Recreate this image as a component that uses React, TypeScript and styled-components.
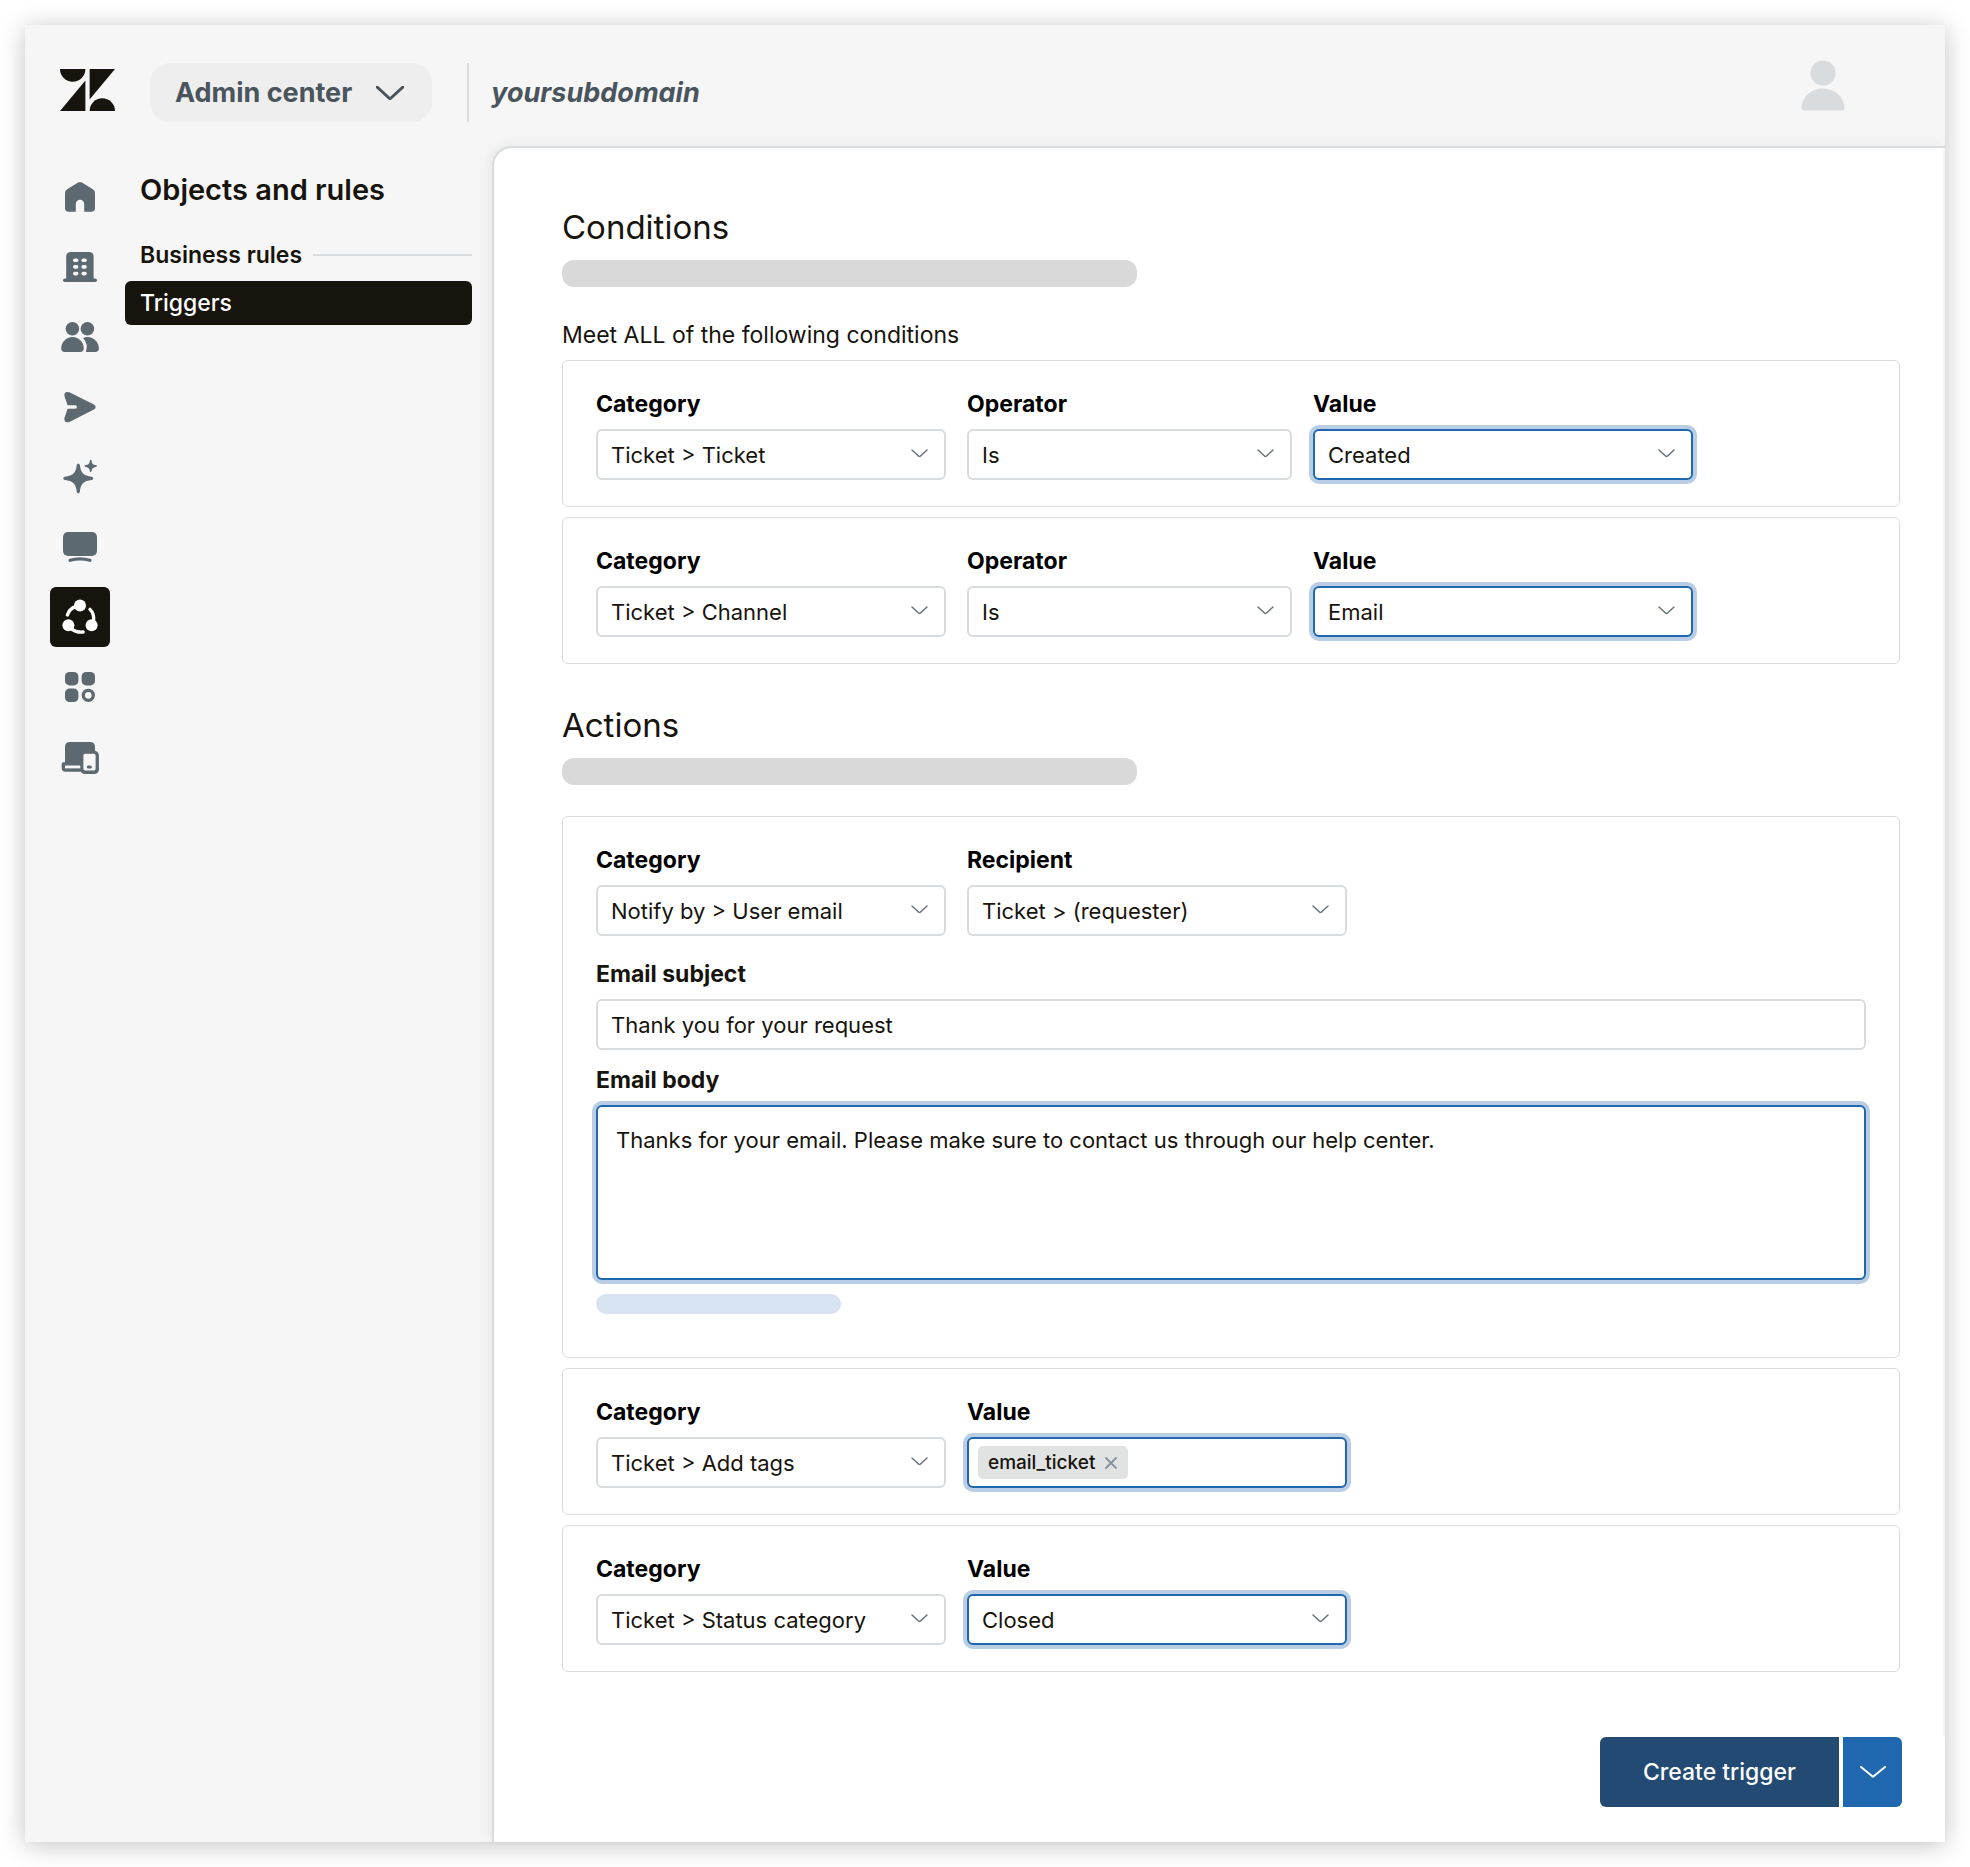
import React, { useId, useState } from 'react';
import styled, { createGlobalStyle, css } from 'styled-components';

const color = {
  ink: '#17140d',
  label: '#000000',
  slate: '#49545c',
  icon: '#5c6970',
  line: '#d8dcde',
  chrome: '#f6f6f6',
  pill: '#eeeeee',
  placeholder: '#d9d9d9',
  placeholderBlue: '#d7e3f1',
  focus: '#1f68b0',
  focusRing: '#b9cde5',
  navy: '#234a72',
};

const GlobalStyle = createGlobalStyle`
  *, *::before, *::after { box-sizing: border-box; }
  body {
    margin: 0;
    background: #ffffff;
    color: ${color.ink};
    font-family: Inter, "Liberation Sans", sans-serif;
    font-size: 22px;
    line-height: 30px;
  }
  button, input, select, textarea {
    margin: 0;
    font: inherit;
    color: inherit;
  }
`;

const Window = styled.div`
  display: flex;
  flex-direction: column;
  min-height: calc(100vh - 50px);
  margin: 25px;
  background: ${color.chrome};
  box-shadow: 0 3px 24px rgba(0, 0, 0, 0.24);
`;

const Header = styled.header`
  display: flex;
  align-items: center;
  height: 121px;
  padding: 14px 100px 0 35px;
`;

const LogoLink = styled.a`
  display: flex;
  margin: 0 35px 5px 0;
`;

const ProductButton = styled.button`
  display: flex;
  align-items: center;
  gap: 24px;
  height: 59px;
  padding: 0 28px 0 25px;
  border: 0;
  border-radius: 20px;
  background: ${color.pill};
  color: ${color.slate};
  font-size: 27px;
  font-weight: 700;
`;

const Subdomain = styled.div`
  display: flex;
  align-items: center;
  height: 59px;
  margin-left: 35px;
  padding-left: 22px;
  border-left: 2px solid ${color.line};
  color: ${color.slate};
  font-size: 27px;
  font-style: italic;
  font-weight: 700;
`;

const ProfileButton = styled.button`
  display: flex;
  margin: 0 0 14px auto;
  padding: 0;
  border: 0;
  background: none;
`;

const Body = styled.div`
  display: flex;
  flex: 1;
`;

const Rail = styled.nav`
  display: flex;
  flex: 0 0 100px;
  flex-direction: column;
  align-items: center;
  gap: 10px;
  padding: 21px 0 0 10px;
`;

const RailLink = styled.a<{ $active?: boolean }>`
  display: grid;
  place-items: center;
  width: 60px;
  height: 60px;
  border-radius: 6px;
  background: ${(p) => (p.$active ? color.ink : 'transparent')};
  color: ${(p) => (p.$active ? '#ffffff' : color.icon)};
`;

const SideNav = styled.nav`
  flex: 0 0 367px;
  padding: 24px 20px 0 0;
`;

const SideTitle = styled.h1`
  margin: 0 0 31px;
  padding-left: 15px;
  font-size: 29px;
  font-weight: 600;
  line-height: 40px;
`;

const SideGroup = styled.h2`
  display: flex;
  align-items: center;
  gap: 11px;
  margin: 0 0 12px;
  padding-left: 15px;
  font-size: 23px;
  font-weight: 600;
  line-height: 28px;

  &::after {
    content: '';
    flex: 1;
    height: 2px;
    background: ${color.line};
  }
`;

const SideLink = styled.a`
  display: block;
  padding: 7px 15px;
  border-radius: 6px;
  background: ${color.ink};
  color: #ffffff;
  font-size: 23px;
  font-weight: 500;
  text-decoration: none;
`;

const Main = styled.main`
  display: flex;
  flex: 1;
  flex-direction: column;
  min-width: 0;
  border-top: 2px solid ${color.line};
  border-left: 2px solid ${color.line};
  border-top-left-radius: 20px;
  background: #ffffff;
  box-shadow: -4px -2px 10px rgba(0, 0, 0, 0.05);
`;

const Content = styled.div`
  display: flex;
  flex: 1;
  flex-direction: column;
  gap: 41px;
  padding: 59px 43px 65px 68px;
  border-right: 2px solid ${color.chrome};
`;

const Heading = styled.h2`
  margin: 0 0 13px;
  font-size: 33px;
  font-weight: 400;
  line-height: 40px;
`;

const Placeholder = styled.div<{ $tone?: 'blue' }>`
  max-width: 575px;
  height: 27px;
  border-radius: 12px;
  background: ${color.placeholder};

  ${(p) =>
    p.$tone === 'blue' &&
    css`
      max-width: 245px;
      height: 20px;
      border-radius: 10px;
      background: ${color.placeholderBlue};
    `}
`;

const Intro = styled.p`
  margin: 33px 0 10px;
  font-size: 23px;
`;

const CardList = styled.div<{ $spaced?: boolean }>`
  display: flex;
  flex-direction: column;
  gap: 10px;
  margin-top: ${(p) => (p.$spaced ? '31px' : '0')};
`;

const Card = styled.div<{ $tall?: boolean }>`
  padding: 28px 33px ${(p) => (p.$tall ? '43px' : '26px')};
  border: 1px solid ${color.line};
  border-radius: 6px;
`;

const Row = styled.div`
  display: flex;
  gap: 21px;
`;

const widths = { category: '350px', operator: '325px', value: '380px', full: '100%' };
type Width = keyof typeof widths;

const Field = styled.div<{ $width: Width; $gap?: number }>`
  display: flex;
  flex: 0 1 ${(p) => widths[p.$width]};
  flex-direction: column;
  gap: 10px;
  min-width: 0;
  margin-top: ${(p) => p.$gap ?? 0}px;
`;

const Label = styled.label<{ $soft?: boolean }>`
  color: ${(p) => (p.$soft ? color.ink : color.label)};
  font-size: 23px;
  font-weight: 700;
`;

const boxStyle = css<{ $focused?: boolean }>`
  width: 100%;
  border: 2px solid ${(p) => (p.$focused ? color.focus : color.line)};
  border-radius: 6px;
  outline: 0;
  background: #ffffff;
  box-shadow: ${(p) => (p.$focused ? `0 0 0 4px ${color.focusRing}` : 'none')};
`;

const SelectFrame = styled.div`
  display: grid;
  align-items: center;

  > * { grid-area: 1 / 1; }
  > svg { justify-self: end; margin: 0 18px 2px 0; pointer-events: none; color: #68737d; }
`;

const SelectBox = styled.select<{ $focused?: boolean }>`
  ${boxStyle}
  height: 51px;
  padding: 0 44px 0 13px;
  appearance: none;
`;

const TextInput = styled.input<{ $focused?: boolean }>`
  ${boxStyle}
  height: 51px;
  padding: 0 13px;
`;

const TextArea = styled.textarea<{ $focused?: boolean }>`
  ${boxStyle}
  display: block;
  height: 175px;
  margin-bottom: 4px;
  padding: 18px;
  resize: none;
`;

const TagBox = styled.div<{ $focused?: boolean }>`
  ${boxStyle}
  display: flex;
  align-items: center;
  gap: 8px;
  height: 51px;
  padding: 0 9px;
`;

const Tag = styled.span`
  display: flex;
  align-items: center;
  gap: 10px;
  height: 33px;
  padding: 0 11px 0 10px;
  border-radius: 5px;
  background: #e1e2e2;
  font-size: 19px;
  font-weight: 500;
`;

const TagRemove = styled.button`
  display: flex;
  padding: 0;
  border: 0;
  background: none;
  color: #87929d;
`;

const TagEntry = styled.input`
  flex: 1;
  min-width: 0;
  padding: 0;
  border: 0;
  outline: 0;
  background: none;
`;

const Footer = styled.footer`
  display: flex;
  justify-content: flex-end;
  gap: 4px;
  padding: 0 43px 35px;
`;

const PrimaryButton = styled.button`
  height: 70px;
  padding: 0 43px;
  border: 0;
  border-radius: 6px 0 0 6px;
  background: ${color.navy};
  color: #ffffff;
  font-size: 23px;
  font-weight: 500;
`;

const MenuButton = styled.button`
  display: grid;
  place-items: center;
  width: 59px;
  height: 70px;
  padding: 0;
  border: 0;
  border-radius: 0 6px 6px 0;
  background: ${color.focus};
  color: #ffffff;
`;

type ChevronProps = { width: number; height: number; stroke: number };

const Chevron = ({ width, height, stroke }: ChevronProps) => (
  <svg width={width} height={height} viewBox={`0 0 ${width} ${height}`} fill="none" aria-hidden="true">
    <path
      d={`M1 1 L${width / 2 - 1} ${height - 2} Q${width / 2} ${height - 1} ${width / 2 + 1} ${height - 2} L${width - 1} 1`}
      stroke="currentColor"
      strokeWidth={stroke}
      strokeLinecap="round"
      strokeLinejoin="round"
    />
  </svg>
);

const Logo = () => (
  <svg width="55" height="42" viewBox="0 0 55 42" fill={color.ink} aria-hidden="true">
    <path d="M0 0H25.4A12.7 12.7 0 0 1 0 0Z" />
    <path d="M25.4 11.4V42H0Z" />
    <path d="M29.6 0H55L29.6 30.6Z" />
    <path d="M29.6 42A12.7 12.7 0 0 1 55 42Z" />
  </svg>
);

const Avatar = () => (
  <svg width="44" height="51" viewBox="0 0 44 51" fill={color.line} aria-hidden="true">
    <circle cx="22" cy="13" r="12.6" />
    <path d="M22 28.5C34 28.5 43 37.5 43.5 47.5Q43.5 50.5 40.5 50.5H3.5Q.5 50.5 .5 47.5C1 37.5 10 28.5 22 28.5Z" />
  </svg>
);

const RailIcon = ({ children }: { children: React.ReactNode }) => (
  <svg width="40" height="40" viewBox="0 0 40 40" fill="currentColor" aria-hidden="true">
    {children}
  </svg>
);

const railItems: { name: string; active?: boolean; icon: React.ReactNode }[] = [
  {
    name: 'Home',
    icon: (
      <path d="M18 5.5Q20 4.3 22 5.5L33.2 12.6Q35 13.8 35 16V31Q35 34.8 31.2 34.8H24.2V27A4.2 4.2 0 0 0 15.8 27V34.8H8.8Q5 34.8 5 31V16Q5 13.8 6.8 12.6Z" />
    ),
  },
  {
    name: 'Account',
    icon: (
      <>
        <path d="M11 5H28.8Q33.6 5 33.6 9.8V33H6.2V9.8Q6.2 5 11 5Z" />
        <rect x="3" y="31.6" width="34" height="3.4" rx="1.7" />
        <g fill={color.chrome}>
          {[11.4, 18.1, 24.8].map((y) => (
            <React.Fragment key={y}>
              <rect x="13" y={y} width="5.4" height="3.6" rx="1.8" />
              <rect x="21.4" y={y} width="5.4" height="3.6" rx="1.8" />
            </React.Fragment>
          ))}
        </g>
      </>
    ),
  },
  {
    name: 'People',
    icon: (
      <>
        <circle cx="12.4" cy="11.7" r="6.8" />
        <circle cx="27.4" cy="11.7" r="6.8" />
        <path d="M12.5 20C18.8 20 23.8 25.4 23.8 31.2Q23.8 35 20 35H5Q1.2 35 1.2 31.2C1.2 25.4 6.2 20 12.5 20Z" />
        <path d="M23.2 21.2Q25 20 27.4 20C33.8 20 38.9 25.4 38.9 31.2Q38.9 35 35 35H25.8Q28.6 27 23.2 21.2Z" />
      </>
    ),
  },
  {
    name: 'Channels',
    icon: (
      <path d="M9.4 5.2L33.9 17.4Q37.4 20 33.9 22.6L9.4 35Q3.8 36.4 4.4 31L7.6 21.7H15.2A1.7 1.7 0 0 0 15.2 18.3H7.6L4.4 9Q3.8 3.8 9.4 5.2Z" />
    ),
  },
  {
    name: 'AI',
    icon: (
      <>
        <path d="M16.7 8Q18.3 5 19.9 8C20.6 16 23.6 18.8 31.8 19.7Q35 21.3 31.8 22.9C23.6 23.8 20.6 26.6 19.9 34.8Q18.3 38 16.7 34.8C16 26.6 13 23.8 4.8 22.9Q1.6 21.3 4.8 19.7C13 18.8 16 16 16.7 8Z" />
        <path d="M30.7 2.8Q31.5 2.8 31.6 4.2Q32 7.7 35.5 8.1Q37 8.2 37 9Q37 9.8 35.5 9.9Q32 10.3 31.6 13.8Q31.5 15.2 30.7 15.2Q29.9 15.2 29.8 13.8Q29.4 10.3 25.9 9.9Q24.4 9.8 24.4 9Q24.4 8.2 25.9 8.1Q29.4 7.7 29.8 4.2Q29.9 2.8 30.7 2.8Z" />
      </>
    ),
  },
  {
    name: 'Workspaces',
    icon: (
      <>
        <rect x="3" y="5" width="34" height="24" rx="5" />
        <path d="M10 33.3Q20 30.3 30 33.3" fill="none" stroke="currentColor" strokeWidth="3.2" strokeLinecap="round" />
      </>
    ),
  },
  {
    name: 'Objects and rules',
    active: true,
    icon: (
      <>
        <circle cx="20" cy="8.4" r="6" />
        <circle cx="8.4" cy="28.2" r="6" />
        <circle cx="31.6" cy="28.2" r="6" />
        <g fill="none" stroke="currentColor" strokeWidth="3.4" strokeLinecap="round">
          <path d="M7.4 18Q9.4 11.8 15.4 9.6" />
          <path d="M30 12.4Q34.4 16.8 33.6 24" />
          <path d="M12 32.4Q16.6 35.8 23.2 35" />
        </g>
      </>
    ),
  },
  {
    name: 'Apps',
    icon: (
      <>
        <rect x="5" y="5" width="13.4" height="13.4" rx="4.5" />
        <rect x="21.6" y="5" width="13.4" height="13.4" rx="4.5" />
        <rect x="5" y="21.6" width="13.4" height="13.4" rx="4.5" />
        <circle cx="28.3" cy="28.3" r="5" fill="none" stroke="currentColor" strokeWidth="3.3" />
      </>
    ),
  },
  {
    name: 'Devices',
    icon: (
      <>
        <path d="M10 5H30Q35 5 35 10V34.8H5.6Q1.7 34.8 1.7 31V26.8Q1.7 25.2 3.3 25.2H5V10Q5 5 10 5Z" />
        <rect x="5" y="28.5" width="16" height="2.9" fill={color.chrome} />
        <rect x="20.3" y="13.8" width="18.6" height="23.2" rx="4.6" />
        <rect x="23.4" y="16.8" width="12.2" height="16.8" rx="1.8" fill={color.chrome} />
        <rect x="26.8" y="28.6" width="5" height="3" rx="1.5" />
      </>
    ),
  },
];

type SelectFieldProps = {
  label: string;
  options: string[];
  width: Width;
  focused?: boolean;
};

const SelectField = ({ label, options, width, focused }: SelectFieldProps) => {
  const id = useId();
  return (
    <Field $width={width}>
      <Label htmlFor={id}>{label}</Label>
      <SelectFrame>
        <SelectBox id={id} $focused={focused} defaultValue={options[0]}>
          {options.map((option) => (
            <option key={option}>{option}</option>
          ))}
        </SelectBox>
        <Chevron width={17} height={9} stroke={1.5} />
      </SelectFrame>
    </Field>
  );
};

const Condition = ({ category, value }: { category: string; value: string }) => (
  <Card>
    <Row>
      <SelectField label="Category" options={[category]} width="category" />
      <SelectField label="Operator" options={['Is']} width="operator" />
      <SelectField label="Value" options={[value]} width="value" focused />
    </Row>
  </Card>
);

const TagField = () => {
  const id = useId();
  const [tags, setTags] = useState(['email_ticket']);
  return (
    <Field $width="value">
      <Label htmlFor={id}>Value</Label>
      <TagBox $focused>
        {tags.map((tag) => (
          <Tag key={tag}>
            {tag}
            <TagRemove
              type="button"
              aria-label={`Remove ${tag}`}
              onClick={() => setTags(tags.filter((t) => t !== tag))}
            >
              <svg width="12" height="12" viewBox="0 0 12 12" fill="none" aria-hidden="true">
                <path d="M1 1L11 11M11 1L1 11" stroke="currentColor" strokeWidth="1.8" strokeLinecap="round" />
              </svg>
            </TagRemove>
          </Tag>
        ))}
        <TagEntry id={id} type="text" />
      </TagBox>
    </Field>
  );
};

export default function App() {
  const subjectId = useId();
  const bodyId = useId();

  return (
    <>
      <GlobalStyle />
      <Window>
        <Header>
          <LogoLink href="#" aria-label="Zendesk">
            <Logo />
          </LogoLink>
          <ProductButton type="button">
            Admin center
            <Chevron width={28} height={14} stroke={3} />
          </ProductButton>
          <Subdomain>yoursubdomain</Subdomain>
          <ProfileButton type="button" aria-label="Profile">
            <Avatar />
          </ProfileButton>
        </Header>
        <Body>
          <Rail aria-label="Admin areas">
            {railItems.map((item) => (
              <RailLink
                key={item.name}
                href="#"
                aria-label={item.name}
                aria-current={item.active ? 'page' : undefined}
                $active={item.active}
              >
                <RailIcon>{item.icon}</RailIcon>
              </RailLink>
            ))}
          </Rail>
          <SideNav aria-label="Objects and rules">
            <SideTitle>Objects and rules</SideTitle>
            <SideGroup>Business rules</SideGroup>
            <SideLink href="#" aria-current="page">
              Triggers
            </SideLink>
          </SideNav>
          <Main>
            <Content>
              <section>
                <Heading>Conditions</Heading>
                <Placeholder />
                <Intro>Meet ALL of the following conditions</Intro>
                <CardList>
                  <Condition category="Ticket > Ticket" value="Created" />
                  <Condition category="Ticket > Channel" value="Email" />
                </CardList>
              </section>
              <section>
                <Heading>Actions</Heading>
                <Placeholder />
                <CardList $spaced>
                  <Card $tall>
                    <Row>
                      <SelectField label="Category" options={['Notify by > User email']} width="category" />
                      <SelectField label="Recipient" options={['Ticket > (requester)']} width="value" />
                    </Row>
                    <Field $width="full" $gap={23}>
                      <Label htmlFor={subjectId} $soft>
                        Email subject
                      </Label>
                      <TextInput id={subjectId} type="text" defaultValue="Thank you for your request" />
                    </Field>
                    <Field $width="full" $gap={15}>
                      <Label htmlFor={bodyId} $soft>
                        Email body
                      </Label>
                      <TextArea
                        id={bodyId}
                        $focused
                        defaultValue="Thanks for your email. Please make sure to contact us through our help center."
                      />
                      <Placeholder $tone="blue" />
                    </Field>
                  </Card>
                  <Card>
                    <Row>
                      <SelectField label="Category" options={['Ticket > Add tags']} width="category" />
                      <TagField />
                    </Row>
                  </Card>
                  <Card>
                    <Row>
                      <SelectField label="Category" options={['Ticket > Status category']} width="category" />
                      <SelectField label="Value" options={['Closed']} width="value" focused />
                    </Row>
                  </Card>
                </CardList>
              </section>
            </Content>
            <Footer>
              <PrimaryButton type="button">Create trigger</PrimaryButton>
              <MenuButton type="button" aria-label="More create options">
                <Chevron width={26} height={12} stroke={2} />
              </MenuButton>
            </Footer>
          </Main>
        </Body>
      </Window>
    </>
  );
}
